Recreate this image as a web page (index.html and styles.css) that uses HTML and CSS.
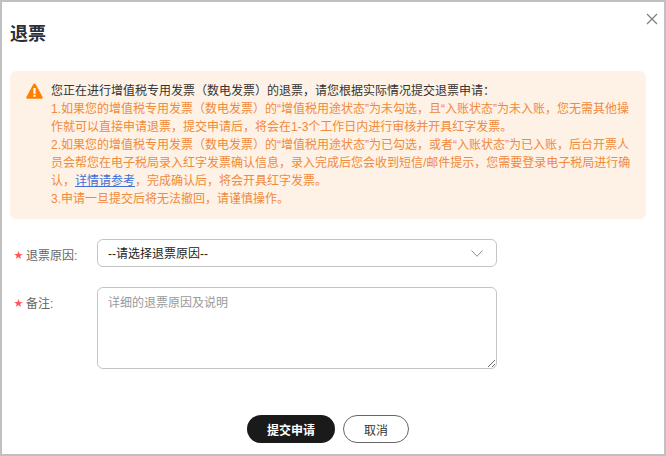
FILE: index.html
```html
<!DOCTYPE html>
<html lang="zh-CN">
<head>
<meta charset="utf-8">
<title>退票</title>
<link rel="stylesheet" href="styles.css">
</head>
<body>
<div class="dialog">
  <button class="close" aria-label="关闭">
    <svg width="12" height="12" viewBox="0 0 12 12"><path d="M1 1L11 11M11 1L1 11" stroke="#808080" stroke-width="1.3" fill="none"/></svg>
  </button>
  <h1 class="title">退票</h1>
  <div class="alert">
    <svg class="alert-icon" width="17" height="16" viewBox="0 0 17 16"><path d="M8.5 0.5C9 0.5 9.4 0.8 9.6 1.1L16.600 14C17 14.8 16.5 15.7 15.600 15.7H1.400C0.500 15.7 0 14.8 0.400 14L7.400 1.100C7.600 0.800 8 0.500 8.500 0.500Z" fill="#ff8000"/><rect x="7.400" y="5" width="2.200" height="5.800" fill="#fff"/><rect x="7.400" y="11.800" width="2.200" height="2" fill="#fff"/></svg>
    <div class="alert-text">
      <p class="lead">您正在进行增值税专用发票（数电发票）的退票，请您根据实际情况提交退票申请：</p>
      <p>1.如果您的增值税专用发票（数电发票）的“增值税用途状态”为未勾选，且“入账状态”为未入账，您无需其他操</p>
      <p>作就可以直接申请退票，提交申请后，将会在1-3个工作日内进行审核并开具红字发票。</p>
      <p>2.如果您的增值税专用发票（数电发票）的“增值税用途状态”为已勾选，或者“入账状态”为已入账，后台开票人</p>
      <p>员会帮您在电子税局录入红字发票确认信息，录入完成后您会收到短信/邮件提示，您需要登录电子税局进行确</p>
      <p>认，<a class="link" href="#">详情请参考</a>，完成确认后，将会开具红字发票。</p>
      <p>3.申请一旦提交后将无法撤回，请谨慎操作。</p>
    </div>
  </div>
  <form class="form">
    <div class="row">
      <label class="label"><span class="star">★</span>退票原因:</label>
      <div class="select">
        <span>--请选择退票原因--</span>
        <svg width="12" height="7" viewBox="0 0 12 7"><path d="M0.500 0.500L6 6.300L11.500 0.500" stroke="#8c8c8c" stroke-width="1" fill="none"/></svg>
      </div>
    </div>
    <div class="row row-area">
      <label class="label"><span class="star">★</span>备注:</label>
      <textarea class="area" placeholder="详细的退票原因及说明"></textarea>
    </div>
    <div class="actions">
      <button type="button" class="btn btn-primary">提交申请</button>
      <button type="button" class="btn btn-ghost">取消</button>
    </div>
  </form>
</div>
</body>
</html>
```
FILE: styles.css
```css
* { box-sizing: border-box; }
html, body { margin: 0; padding: 0; }
body {
  width: 666px;
  height: 456px;
  overflow: hidden;
  background: #fff;
  font-family: "Liberation Sans", "Noto Sans CJK SC", sans-serif;
  font-size: 12px;
}
.dialog {
  position: relative;
  width: 666px;
  height: 456px;
  border: 2px solid #c0c0c0;
  padding: 0 18px 0 8px;
}
.close {
  position: absolute;
  top: 11px;
  right: 6px;
  width: 12px;
  height: 12px;
  padding: 0;
  border: 0;
  background: none;
  display: block;
  line-height: 0;
}
.title {
  margin: 0;
  padding-top: 20px;
  height: 69px;
  font-size: 18px;
  line-height: 24px;
  font-weight: 700;
  color: #2b2f3a;
}
.alert {
  display: flex;
  gap: 8px;
  height: 148px;
  padding: 11px 16px;
  background: #fef2e6;
  border-radius: 6px;
}
.alert-icon { flex: none; margin-top: 1px; }
.alert-text { color: #f08a3c; line-height: 18px; white-space: nowrap; }
.alert-text p { margin: 0; }
.alert-text .lead { color: #333; }
.link { color: #3f6fd8; text-decoration: underline; }
.form { padding-top: 20px; }
.row { display: flex; align-items: flex-start; margin-bottom: 20px; }
.label {
  width: 87px;
  flex: none;
  display: flex;
  align-items: center;
  height: 28px;
  padding-top: 2px;
  color: #666;
  white-space: nowrap;
  padding-left: 4px;
}
.star { color: #f55; font-size: 9px; width: 12px; flex: none; }
.select {
  width: 400px;
  height: 28px;
  padding: 0 13px 2px 10px;
  border: 1px solid #c4c4c4;
  border-radius: 6px;
  display: flex;
  align-items: center;
  justify-content: space-between;
  color: #222;
}
.select svg { margin-top: 2px; }
.area {
  display: block;
  width: 400px;
  height: 82px;
  padding: 6px 10px;
  border: 1px solid #c4c4c4;
  border-radius: 6px;
  font: inherit;
  line-height: 18px;
  color: #333;
  resize: vertical;
  outline: none;
}
.area::placeholder { color: #999; opacity: 1; }
.actions {
  display: flex;
  justify-content: center;
  gap: 8px;
  margin-top: 46px;
}
.btn {
  height: 28px;
  border-radius: 14px;
  font: inherit;
  padding: 0;
}
.btn-primary { width: 88px; background: #1a1a1a; color: #fff; border: 0; font-weight: 700; }
.btn-ghost { width: 66px; background: #fff; color: #333; border: 1px solid #666; }
```
